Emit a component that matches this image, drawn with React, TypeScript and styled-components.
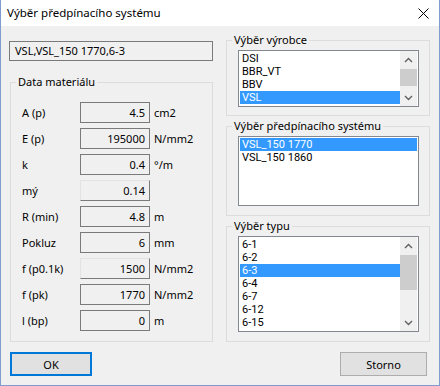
import React from 'react';
import styled, { createGlobalStyle } from 'styled-components';

const GlobalStyle = createGlobalStyle`
  html, body {
    margin: 0;
    padding: 0;
    background: #f0f0f0;
  }
  body {
    font-family: "Noto Sans", "Open Sans", sans-serif;
    font-size: 11px;
    color: #000;
  }
`;

interface MaterialRow {
  label: string;
  value: string;
  unit: string;
  soft?: boolean;
}

const materialRows: MaterialRow[] = [
  { label: 'A (p)', value: '4.5', unit: 'cm2' },
  { label: 'E (p)', value: '195000', unit: 'N/mm2' },
  { label: 'k', value: '0.4', unit: '°/m' },
  { label: 'mý', value: '0.14', unit: '', soft: true },
  { label: 'R (min)', value: '4.8', unit: 'm' },
  { label: 'Pokluz', value: '6', unit: 'mm' },
  { label: 'f (p0.1k)', value: '1500', unit: 'N/mm2', soft: true },
  { label: 'f (pk)', value: '1770', unit: 'N/mm2' },
  { label: 'l (bp)', value: '0', unit: 'm' },
];

const ChevronUp = () => (
  <svg width="9" height="6" viewBox="0 0 9 6">
    <path d="M1 5 L4.5 1.5 L8 5" fill="none" stroke="#606060" strokeWidth="1.4" />
  </svg>
);

const ChevronDown = () => (
  <svg width="9" height="6" viewBox="0 0 9 6">
    <path d="M1 1 L4.5 4.5 L8 1" fill="none" stroke="#606060" strokeWidth="1.4" />
  </svg>
);

interface ListProps {
  items: string[];
  selected: number;
  height: number;
  thumb?: { top: number; size: number };
}

const ListBox: React.FC<ListProps> = ({ items, selected, height, thumb }) => (
  <ListFrame $height={height}>
    <ListItems>
      {items.map((item, i) => (
        <ListItem key={item} $selected={i === selected}>{item}</ListItem>
      ))}
    </ListItems>
    {thumb && (
      <ScrollBar>
        <ScrollArrow><ChevronUp /></ScrollArrow>
        <ScrollTrack>
          <ScrollThumb style={{ marginTop: thumb.top, height: thumb.size }} />
        </ScrollTrack>
        <ScrollArrow><ChevronDown /></ScrollArrow>
      </ScrollBar>
    )}
  </ListFrame>
);

const App: React.FC = () => {
  return (
    <>
      <GlobalStyle />
      <Window>
        <TitleBar>
          <Title>Výběr předpínacího systému</Title>
          <CloseButton>
            <svg width="11" height="11" viewBox="0 0 11 11">
              <path d="M0.5 0.5 L10.5 10.5 M10.5 0.5 L0.5 10.5" stroke="#000" strokeWidth="1" />
            </svg>
          </CloseButton>
        </TitleBar>

        <Body>
          <LeftColumn>
            <SummaryBox>VSL,VSL_150 1770,6-3</SummaryBox>
            <Group $height={267} $left={1} $top={14}>
              <Legend>Data materiálu</Legend>
              <MaterialGrid>
                {materialRows.map((row) => (
                  <Row key={row.label}>
                    <RowLabel>{row.label}</RowLabel>
                    <ValueBox $soft={row.soft}>{row.value}</ValueBox>
                    <Unit>{row.unit}</Unit>
                  </Row>
                ))}
              </MaterialGrid>
            </Group>
          </LeftColumn>

          <RightColumn>
            <Group $height={83}>
              <Legend>Výběr výrobce</Legend>
              <GroupList>
                <ListBox
                  items={['DSI', 'BBR_VT', 'BBV', 'VSL']}
                  selected={3}
                  height={57}
                  thumb={{ top: 1, size: 17 }}
                />
              </GroupList>
            </Group>
            <Group $height={97}>
              <Legend>Výběr předpínacího systému</Legend>
              <GroupList>
                <ListBox items={['VSL_150 1770', 'VSL_150 1860']} selected={0} height={70} />
              </GroupList>
            </Group>
            <Group $height={123}>
              <Legend>Výběr typu</Legend>
              <GroupList>
                <ListBox
                  items={['6-1', '6-2', '6-3', '6-4', '6-7', '6-12', '6-15']}
                  selected={2}
                  height={96}
                  thumb={{ top: 1, size: 35 }}
                />
              </GroupList>
            </Group>
          </RightColumn>
        </Body>

        <Footer>
          <DialogButton $default>OK</DialogButton>
          <DialogButton $wide>Storno</DialogButton>
        </Footer>
      </Window>
    </>
  );
};

const Window = styled.div`
  width: 440px;
  height: 386px;
  box-sizing: border-box;
  border: 1px solid #7f9bd2;
  border-top: none;
  background: #f0f0f0;
  display: flex;
  flex-direction: column;
  overflow: hidden;
`;

const TitleBar = styled.div`
  height: 26px;
  flex-shrink: 0;
  background: #fff;
  display: flex;
  align-items: center;
  justify-content: space-between;
  padding-left: 6px;
`;

const Title = styled.div`
  font-size: 11.5px;
  line-height: 16px;
  margin-top: -1px;
`;

const CloseButton = styled.div`
  width: 21px;
  height: 26px;
  display: flex;
  align-items: center;
  justify-content: flex-start;
  padding-top: 1px;
  box-sizing: border-box;
`;

const Body = styled.div`
  display: grid;
  grid-template-columns: 204px 204px;
  column-gap: 13px;
  padding: 7px 9px 0 8px;
  align-items: start;
`;

const LeftColumn = styled.div`
  display: flex;
  flex-direction: column;
  padding-top: 8px;
`;

const RightColumn = styled.div`
  display: flex;
  flex-direction: column;
  gap: 3px;
`;

const SummaryBox = styled.div`
  height: 20px;
  box-sizing: border-box;
  border: 1px solid #7a7a7a;
  padding-left: 5px;
  line-height: 18px;
  white-space: nowrap;
`;

const Group = styled.fieldset<{ $height: number; $left?: number; $top?: number }>`
  margin: ${(p) => p.$top ?? 0}px 0 0 ${(p) => p.$left ?? 0}px;
  padding: 0;
  height: ${(p) => p.$height}px;
  box-sizing: border-box;
  border: 1px solid #dcdcdc;
  min-width: 0;
`;

const Legend = styled.legend`
  margin-left: 5px;
  padding: 0 2px;
  line-height: 14px;
`;

const MaterialGrid = styled.div`
  display: flex;
  flex-direction: column;
  gap: 5px;
  padding: 13px 0 0 11px;
`;

const Row = styled.div`
  display: grid;
  grid-template-columns: 54px 70px auto;
  column-gap: 4px;
  align-items: center;
  height: 21px;
`;

const RowLabel = styled.div`
  white-space: nowrap;
`;

const ValueBox = styled.div<{ $soft?: boolean }>`
  height: 21px;
  box-sizing: border-box;
  border: 1px solid #7a7a7a;
  border-color: ${(p) => (p.$soft ? '#e3e3e3 #7a7a7a #7a7a7a #e3e3e3' : '#7a7a7a')};
  text-align: right;
  padding-right: 4px;
  line-height: 19px;
`;

const Unit = styled.div`
  white-space: nowrap;
`;

const GroupList = styled.div`
  padding: 3px 10px 0 11px;
`;

const ListFrame = styled.div<{ $height: number }>`
  height: ${(p) => p.$height}px;
  box-sizing: border-box;
  border: 1px solid #828790;
  background: #fff;
  padding: 1px;
  display: flex;
  overflow: hidden;
`;

const ListItems = styled.div`
  flex: 1;
  display: flex;
  flex-direction: column;
  min-width: 0;
`;

const ListItem = styled.div<{ $selected?: boolean }>`
  height: 13px;
  flex-shrink: 0;
  font-family: Roboto, "Noto Sans", sans-serif;
  font-size: 11px;
  line-height: 13px;
  padding-left: 2px;
  white-space: nowrap;
  background: ${(p) => (p.$selected ? '#3399ff' : 'transparent')};
  color: ${(p) => (p.$selected ? '#fff' : '#000')};
`;

const ScrollBar = styled.div`
  width: 17px;
  margin: -1px 0;
  display: flex;
  flex-direction: column;
  background: #f0f0f0;
`;

const ScrollArrow = styled.div`
  height: 17px;
  flex-shrink: 0;
  display: flex;
  align-items: center;
  justify-content: center;
`;

const ScrollTrack = styled.div`
  flex: 1;
  display: flex;
  flex-direction: column;
`;

const ScrollThumb = styled.div`
  background: #cdcdcd;
  flex-shrink: 0;
`;

const Footer = styled.div`
  display: flex;
  justify-content: space-between;
  align-items: center;
  padding: 10px 12px 0 9px;
`;

const DialogButton = styled.button<{ $default?: boolean; $wide?: boolean }>`
  width: ${(p) => (p.$wide ? 87 : 82)}px;
  height: 24px;
  box-sizing: border-box;
  background: #e1e1e1;
  border: ${(p) => (p.$default ? '2px solid #0078d7' : '1px solid #adadad')};
  font-family: "Noto Sans", "Open Sans", sans-serif;
  font-size: 11px;
  color: #000;
  padding: 0;
  cursor: pointer;
`;

export default App;
